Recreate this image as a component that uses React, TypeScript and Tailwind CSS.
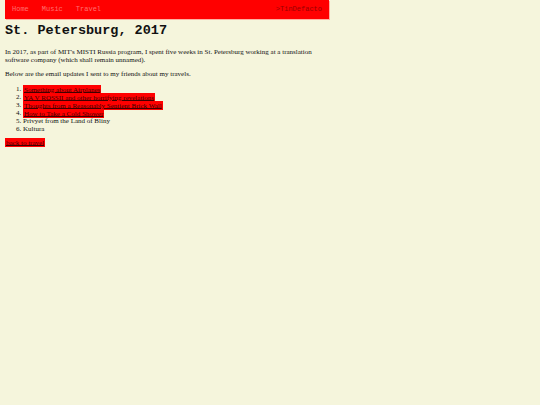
import React from "react";

const items: { t: string; link: boolean }[] = [
  { t: "Something about Airplanes", link: true },
  { t: "YA V ROSSII and other horrifying revelations", link: true },
  { t: "Thoughts from a Reasonably Sentient Brick Wall", link: true },
  { t: "How to Take a Cold Shower", link: true },
  { t: "Privyet from the Land of Bliny", link: false },
  { t: "Kultura", link: false },
];

export default function App() {
  return (
    <div className="min-h-[405px] w-full bg-[#f5f5dc] pb-4 text-[#111]" style={{ fontFamily: '"Liberation Serif", serif' }}>
      <nav
        className="ml-[5px] flex h-[19px] w-[324px] items-center justify-between bg-[#ff0000] px-[7px] text-[7px] shadow-[1px_1px_0_#ffb0a0]"
        style={{ fontFamily: '"Liberation Mono", monospace' }}
      >
        <div className="flex gap-[13px] text-[#ff7070]">
          <span>Home</span>
          <span>Music</span>
          <span>Travel</span>
        </div>
        <span className="text-[#990000]">&gt;TinDefacto</span>
      </nav>
      <div className="px-[5px]">
        <h1
          className="mt-[3px] text-[13.5px] font-bold leading-[17px] text-[#111]"
          style={{ fontFamily: '"Liberation Mono", monospace' }}
        >
          St. Petersburg, 2017
        </h1>
        <p className="mt-[9px] w-[320px] text-[7px] leading-[8px]">
          In 2017, as part of MIT's MISTI Russia program, I spent five weeks in St. Petersburg working at a translation software company (which shall remain unnamed).
        </p>
        <p className="mt-[6px] text-[7px] leading-[8px]">
          Below are the email updates I sent to my friends about my travels.
        </p>
        <ol className="mt-[7px] list-decimal pl-[18px] text-[7px] leading-[8px]">
          {items.map((it) => (
            <li key={it.t}>
              {it.link ? (
                <a href="#" className="bg-[#ff0000] px-[1px] py-[0.5px] text-[#400000] underline">
                  {it.t}
                </a>
              ) : (
                it.t
              )}
            </li>
          ))}
        </ol>
        <p className="mt-[5px] text-[7px] leading-[8px]">
          <a href="#" className="bg-[#ff0000] px-[1px] py-[0.5px] text-[#400000] underline">
            back to travel
          </a>
        </p>
      </div>
    </div>
  );
}
